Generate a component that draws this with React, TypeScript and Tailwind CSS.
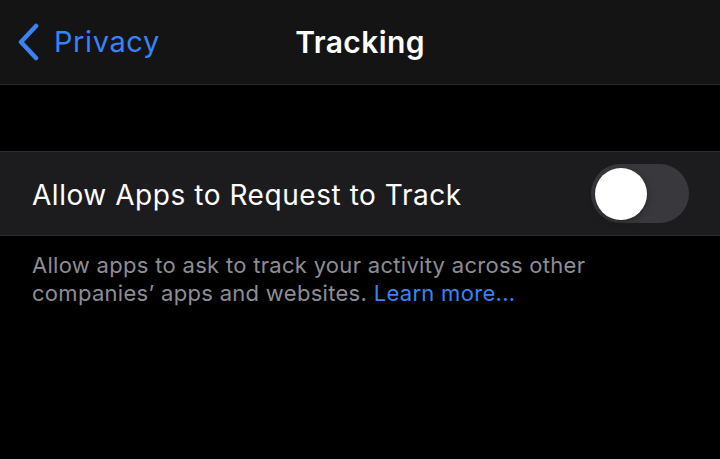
export default function App() {
  return (
    <div
      className="flex h-[459px] w-[720px] flex-col overflow-hidden bg-black"
      style={{ fontFamily: "Inter, 'Noto Sans', sans-serif" }}
    >
      <header className="relative flex h-[85px] shrink-0 items-center border-b border-[#2a2a2c] bg-[#141414]">
        <button className="flex items-center gap-[14px] pl-[16px] text-[#3a82f7]">
          <svg width="24" height="38" viewBox="0 0 24 38" fill="none">
            <path
              d="M20 3 L5 19 L20 35"
              stroke="currentColor"
              strokeWidth="4.5"
              strokeLinecap="round"
              strokeLinejoin="round"
            />
          </svg>
          <span className="text-[29px] tracking-[0.6px]">Privacy</span>
        </button>
        <h1 className="absolute left-1/2 -translate-x-1/2 text-[30px] font-semibold tracking-[0.4px] text-white">
          Tracking
        </h1>
      </header>

      <div className="h-[66px] shrink-0" />

      <div className="flex h-[85px] shrink-0 items-center justify-between border-y border-[#2e2e30] bg-[#1c1c1e] pl-[32px] pr-[31px]">
        <span className="pt-[3px] text-[28px] tracking-[0.55px] text-white">
          Allow Apps to Request to Track
        </span>
        <div className="flex h-[59px] w-[98px] items-center rounded-full bg-[#39393d] pl-[4px]">
          <div className="h-[52px] w-[52px] rounded-full bg-white shadow-[0_2px_6px_rgba(0,0,0,0.35)]" />
        </div>
      </div>

      <p className="px-[32px] pt-[15px] text-[22px] leading-[28px] tracking-[0.3px] text-[#8d8d93]">
        Allow apps to ask to track your activity across other
        <br />
        companies’ apps and websites. <span className="text-[#3a82f7]">Learn more...</span>
      </p>
    </div>
  );
}
